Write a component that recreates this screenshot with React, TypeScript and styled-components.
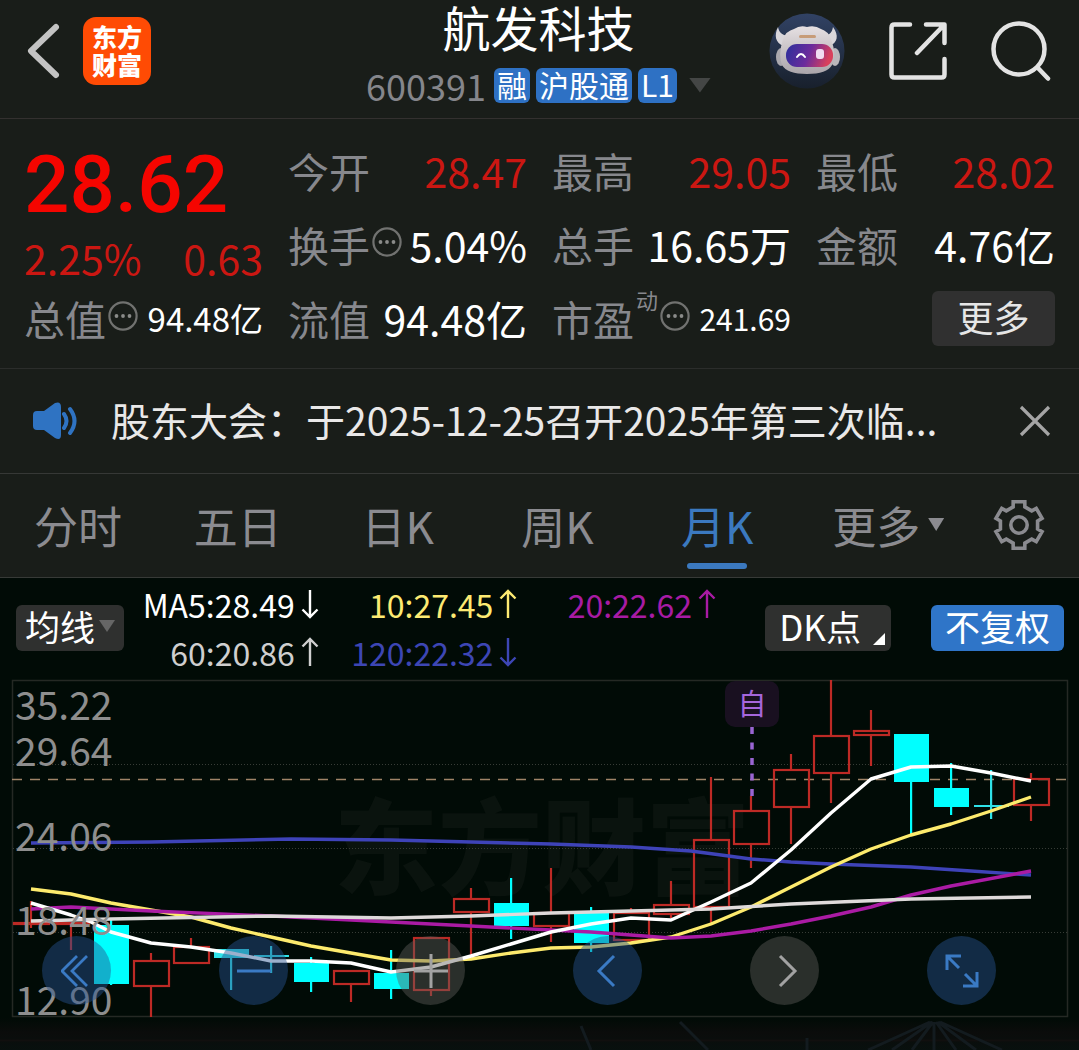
import React from "react";
import styled, { createGlobalStyle } from "styled-components";

const GlobalStyle = createGlobalStyle`
  *, *::before, *::after { box-sizing: border-box; }
  body {
    margin: 0;
    background: #010b06;
    color: #fff;
    font-family: "Noto Sans CJK SC", "Noto Sans", sans-serif;
  }
  button {
    margin: 0;
    padding: 0;
    border: 0;
    background: none;
    color: inherit;
    font: inherit;
    cursor: pointer;
  }
  svg { display: block; flex: none; }
  h1, p, dl, dd, dt { margin: 0; font-weight: 400; }
`;

const Page = styled.main`
  display: flex;
  flex-direction: column;
`;

/* ---------- header ---------- */

const Header = styled.header`
  display: grid;
  grid-template-columns: 1fr auto 1fr;
  align-items: start;
  height: 119px;
  padding: 0 28px 0 26px;
  background: #191d19;
  border-bottom: 1px solid #33302f;
`;

const HeaderSide = styled.div<{ $end?: boolean }>`
  display: flex;
  align-items: center;
  justify-content: ${(p) => (p.$end ? "flex-end" : "flex-start")};
  gap: ${(p) => (p.$end ? 44 : 22)}px;
  height: 102px;
`;

const Logo = styled.span`
  display: grid;
  place-content: center;
  width: 68px;
  height: 68px;
  padding-bottom: 2px;
  border-radius: 13px;
  background: #ff4b04;
  font-size: 25px;
  line-height: 28px;
  font-weight: 900;
  text-align: center;
`;

const HeaderCenter = styled.div`
  display: flex;
  flex-direction: column;
  align-items: center;
`;

const StockName = styled.h1`
  margin-bottom: 4px;
  font-size: 48px;
  line-height: 52px;
`;

const CodeRow = styled.div`
  display: flex;
  align-items: center;
  gap: 6px;
  height: 58px;
`;

const Code = styled.span`
  margin-right: 2px;
  color: #85868b;
  font-size: 36px;
  line-height: 40px;
`;

const Tag = styled.span`
  height: 35px;
  padding: 0 3px;
  border-radius: 6px;
  background: #2e71c4;
  font-size: 30px;
  line-height: 32px;
`;

const Triangle = styled.span<{ $w: number; $h: number; $color: string }>`
  width: ${(p) => p.$w}px;
  height: ${(p) => p.$h}px;
  flex: none;
  background: ${(p) => p.$color};
  clip-path: polygon(0 0, 100% 0, 50% 100%);
`;

const CodeMenu = styled.button`
  display: flex;
  padding-left: 6px;
`;

/* ---------- quote ---------- */

const Quote = styled.section`
  display: grid;
  grid-template-columns: repeat(4, 1fr);
  grid-auto-rows: 74px;
  column-gap: 25px;
  padding: 14px 24px 13px;
  background: #191d19;
  border-bottom: 1px solid #2b2d2b;
`;

const PriceBlock = styled.div`
  grid-row: span 2;
  display: flex;
  flex-direction: column;
`;

const Price = styled.strong`
  color: #f50500;
  font-family: Roboto, "Noto Sans", sans-serif;
  font-size: 80px;
  line-height: 104px;
  font-weight: 500;
`;

const Change = styled.div`
  display: flex;
  justify-content: space-between;
  color: #cb1712;
  font-size: 41px;
  line-height: 40px;
`;

const Field = styled.dl`
  display: flex;
  align-items: center;
  justify-content: space-between;
  white-space: nowrap;
`;

const Term = styled.dt`
  display: flex;
  align-items: center;
  gap: 2px;
  color: #87888d;
  font-size: 41px;
  line-height: 60px;

  svg { margin-bottom: 4px; }
`;

const Sup = styled.sup`
  align-self: flex-start;
  font-size: 22px;
  line-height: 22px;
`;

const Value = styled.dd<{ $tone?: "up"; $size?: number }>`
  color: ${(p) => (p.$tone === "up" ? "#cb1712" : "#fff")};
  font-size: ${(p) => p.$size ?? 41}px;
  line-height: 60px;
`;

const MoreButton = styled.button`
  justify-self: end;
  align-self: center;
  width: 123px;
  height: 55px;
  padding-bottom: 4px;
  border-radius: 6px;
  background: #303030;
  color: #e6e6e6;
  font-size: 36px;
  line-height: 50px;
`;

/* ---------- notice ---------- */

const Notice = styled.section`
  display: flex;
  align-items: center;
  height: 105px;
  padding: 0 28px 0 33px;
  background: #191d19;
  border-bottom: 1px solid #363836;
`;

const NoticeText = styled.p`
  flex: 1;
  min-width: 0;
  margin: 0 32px;
  padding-bottom: 4px;
  overflow: hidden;
  white-space: nowrap;
  color: #e9e8e8;
  font-size: 39px;
  line-height: 60px;
`;

/* ---------- tabs ---------- */

const Tabs = styled.nav`
  display: grid;
  grid-template-columns: repeat(6, 4fr) 3fr;
  height: 104px;
  background: #191d19;
  border-bottom: 1px solid #373a37;
`;

const Tab = styled.button<{ $active?: boolean }>`
  position: relative;
  display: flex;
  align-items: center;
  justify-content: center;
  gap: 8px;
  color: ${(p) => (p.$active ? "#3b79bf" : "#8b8b90")};
  font-size: 44px;
  line-height: 64px;
  padding: 0 4px 2px 0;

  &::after {
    content: "";
    display: ${(p) => (p.$active ? "block" : "none")};
    position: absolute;
    bottom: 8px;
    width: 60px;
    height: 6px;
    border-radius: 3px;
    background: #3b79bf;
  }
`;

const MoreTab = styled(Tab)`
  padding-left: 22px;
`;

const SettingsTab = styled(Tab)`
  padding-right: 0;
`;

/* ---------- chart ---------- */

const Toolbar = styled.div`
  display: flex;
  align-items: center;
  height: 100px;
  padding: 0 15px 0 16px;
`;

const Chip = styled.button<{ $pad?: number; $primary?: boolean }>`
  display: flex;
  flex: none;
  align-items: center;
  justify-content: center;
  gap: 4px;
  height: 46px;
  padding: 0 ${(p) => p.$pad ?? 9}px 4px;
  border-radius: 6px;
  background: ${(p) => (p.$primary ? "#2f75c8" : "#2f302f")};
  font-size: 35px;
  line-height: 42px;
`;

const MaList = styled.div`
  display: grid;
  grid-template-columns: repeat(3, 1fr);
  flex: 0 1 596px;
  grid-auto-rows: 48px;
  margin-left: -4px;
`;

const Ma = styled.span<{ $color: string }>`
  display: flex;
  align-items: center;
  justify-content: flex-end;
  gap: 6px;
  color: ${(p) => p.$color};
  font-size: 32px;
  line-height: 48px;
  white-space: nowrap;
`;

const ToolbarEnd = styled.div`
  display: flex;
  gap: 40px;
  margin-left: auto;
`;

const Corner = styled.span`
  align-self: flex-end;
  width: 12px;
  height: 12px;
  margin: 0 -8px 2px 8px;
  background: #fff;
  clip-path: polygon(100% 0, 100% 100%, 0 100%);
`;

const ChartArea = styled.section`
  position: relative;

  > svg { width: 100%; height: auto; overflow: visible; }
`;

const Controls = styled.div`
  position: absolute;
  inset: auto 83px 45px 42px;
  display: flex;
  justify-content: space-between;
`;

const Round = styled.button<{ $blue?: boolean }>`
  display: grid;
  place-items: center;
  width: 69px;
  height: 69px;
  border-radius: 50%;
  background: ${(p) => (p.$blue ? "rgba(40, 82, 144, 0.46)" : "rgba(96, 94, 90, 0.44)")};
  color: ${(p) => (p.$blue ? "#3a7ac4" : "#a2a2a2")};
`;

const Dots = () => (
  <svg width="30" height="30" viewBox="0 0 30 30" aria-hidden="true">
    <circle cx="15" cy="15" r="13.6" fill="none" stroke="#717270" strokeWidth="2.2" />
    {[8.5, 15, 21.5].map((x) => (
      <circle key={x} cx={x} cy="15" r="1.9" fill="#8a8b89" />
    ))}
  </svg>
);

const Arrow = ({ down }: { down?: boolean }) => (
  <svg width="18" height="30" viewBox="0 0 18 30" fill="none" stroke="currentColor" strokeWidth="2.4" aria-hidden="true">
    <path d={down ? "M9 1V28M1.5 20.5L9 28L16.5 20.5" : "M9 29V2M1.5 9.5L9 2L16.5 9.5"} />
  </svg>
);

const gearPath = (() => {
  const pts: string[] = [];
  for (let i = 0; i < 6; i++) {
    const a = i * 60 - 90;
    [[-18, 19], [-14, 24], [14, 24], [18, 19]].forEach(([d, r]) => {
      const t = ((a + d) * Math.PI) / 180;
      pts.push(`${(27 + r * Math.cos(t)).toFixed(2)} ${(27 + r * Math.sin(t)).toFixed(2)}`);
    });
  }
  return `M${pts.join("L")}Z`;
})();

const Robot = () => (
  <svg width="76" height="76" viewBox="0 0 76 76" aria-hidden="true">
    <defs>
      <linearGradient id="sky" x1="0" y1="0" x2="0" y2="1">
        <stop offset="0" stopColor="#314264" />
        <stop offset="1" stopColor="#18202c" />
      </linearGradient>
      <linearGradient id="shell" x1="0" y1="0" x2="0" y2="1">
        <stop offset="0" stopColor="#e6e0e2" />
        <stop offset="1" stopColor="#aaa5aa" />
      </linearGradient>
      <linearGradient id="visor" x1="0" y1="0" x2="1" y2="0.2">
        <stop offset="0" stopColor="#2b2f9b" />
        <stop offset="0.55" stopColor="#6b2b9c" />
        <stop offset="1" stopColor="#d8405c" />
      </linearGradient>
    </defs>
    <circle cx="38" cy="38" r="37.5" fill="url(#sky)" />
    <path d="M9 14C5 22 6 30 15 33L22 23C14 23 10 20 9 14ZM64 14C70 22 69 30 60 33L52 23C60 23 63 20 64 14Z" fill="#d9d6da" />
    <ellipse cx="12" cy="44" rx="5" ry="9" fill="#aaa8ae" />
    <ellipse cx="66" cy="44" rx="5" ry="9" fill="#b9b6bb" />
    <path d="M14 26Q17 18 25 16Q31 12 38 14Q46 12 52 16Q59 18 62 26Q68 42 63 52Q58 61 38 61Q18 61 13 52Q9 42 14 26Z" fill="url(#shell)" />
    <rect x="30" y="22" width="17" height="3" rx="1.5" fill="#c79c78" />
    <rect x="17" y="31" width="47" height="23" rx="11" fill="url(#visor)" />
    <path d="M28 44Q32 38 36 44" fill="none" stroke="#fff" strokeWidth="2" strokeLinecap="round" />
    <rect x="47" y="36" width="8" height="10" rx="3" fill="#f0dcf2" />
  </svg>
);

/* top/bottom bound the body, high/low the wick */
type Candle = { up: boolean; top: number; bottom: number; high: number; low: number };
const candles: Candle[] = (
  [
    [1, 923, 924, 901, 928], [1, 923, 924, 923, 950], [0, 925, 984, 919, 985], [1, 961, 986, 953, 1017],
    [1, 947, 963, 938, 964], [0, 949, 958, 949, 990], [0, 955, 957, 946, 973], [0, 963, 982, 957, 992],
    [1, 971, 984, 971, 1002], [0, 973, 989, 950, 999], [1, 938, 990, 938, 996], [1, 899, 912, 888, 955],
    [0, 903, 926, 878, 939], [1, 913, 926, 868, 942], [0, 911, 943, 907, 952], [1, 913, 940, 908, 943],
    [1, 905, 914, 881, 918], [1, 840, 907, 777, 925], [1, 811, 844, 796, 868], [1, 770, 807, 754, 844],
    [1, 736, 773, 680, 803], [1, 731, 735, 710, 766], [0, 734, 782, 734, 834], [0, 788, 807, 763, 815],
    [0, 805, 807, 770, 819], [1, 779, 805, 773, 821],
  ] as number[][]
).map(([u, top, bottom, high, low]) => ({ up: u === 1, top, bottom, high, low }));

const averages = [
  { color: "#3e43b8", points: "31,843 151,842 291,839 391,840 471,842 551,844 631,847 691,851 751,859 791,862 831,864 911,867 971,871 1031,875" },
  { color: "#fdeb6d", points: "31,889 71,894 111,903 151,910 191,917 231,928 271,937 311,946 351,953 391,960 431,961 471,959 511,953 551,948 591,947 631,943 671,937 711,924 751,907 791,887 831,867 871,849 911,835 951,824 991,811 1031,797" },
  { color: "#aa1ba4", points: "31,909 71,907 151,911 271,916 391,922 471,926 551,930 591,932 631,935 671,938 711,936 751,931 791,924 831,916 871,907 911,895 951,886 1031,871" },
  { color: "#ffffff", points: "31,903 71,915 91,922 111,932 151,943 191,947 231,953 271,961 311,961 351,963 391,972 431,967 471,956 511,944 551,932 591,924 631,918 671,920 711,902 751,883 791,850 831,813 871,779 911,767 951,766 991,773 1031,781" },
  { color: "#dedada", points: "31,921 111,919 271,916 391,918 471,916 551,913 671,910 711,909 791,904 911,899 1031,897" },
];

const priceLabels: [string, number][] = [
  ["35.22", 720], ["29.64", 766], ["24.06", 851], ["18.48", 935], ["12.90", 1015],
];

const CandleChart = () => (
  <svg viewBox="0 678 1079 372" role="img" aria-label="月K线图">
    <defs>
      <linearGradient id="foot" x1="0" y1="0" x2="0" y2="1">
        <stop offset="0" stopColor="#010b06" />
        <stop offset="0.45" stopColor="#0b0c0b" />
        <stop offset="1" stopColor="#08100e" />
      </linearGradient>
    </defs>
    <rect x="0" y="1018" width="1079" height="32" fill="url(#foot)" />
    <path d="M0 1040.5H1079" stroke="#110f0e" strokeWidth="2" />
    <g stroke="#131b1f" strokeWidth="3" fill="none">
      <path d="M930 1022L868 1050M932 1022L892 1050M933 1022L912 1050M934 1022V1050M936 1022L956 1050M938 1022L976 1050M940 1022L1002 1050" />
      <path d="M680 1022L708 1050M581 1026L591 1050M807 1038V1050" />
    </g>
    <text x="334" y="887" fontSize="104" fontWeight="900" fill="#0a130e">东方财富</text>
    <path d="M12.5 680.5H1067.5V1016.5H12.5Z" fill="none" stroke="#252924" strokeWidth="1.5" />
    <path d="M13 764.5H1067M13 848.5H1067M13 932.5H1067" stroke="#373c36" strokeDasharray="1 2" />
    <path d="M12 779.5H1067" stroke="#a08468" strokeWidth="1.6" strokeDasharray="10 8" />
    {candles.map(({ up, top, bottom, high, low }, i) => {
      const x = 31 + i * 40;
      const body = bottom - top;
      return up ? (
        <g key={i} stroke="#bd2a25" strokeWidth="2.2" fill="none">
          <path d={`M${x} ${high}V${top}M${x} ${bottom}V${low}`} />
          <rect x={x - 17} y={top} width="35" height={body} />
        </g>
      ) : (
        <g key={i} fill={body < 12 ? "#2fe2e8" : "#00ffff"}>
          <rect x={x - 1} y={high} width="2.2" height={low - high} />
          <rect x={x - 17} y={top} width="35" height={body} />
        </g>
      );
    })}
    {averages.map((a) => (
      <polyline key={a.color} points={a.points} fill="none" stroke={a.color} strokeWidth="3.4" strokeLinejoin="round" />
    ))}
    <rect x="725" y="681" width="54" height="46" rx="10" fill="#191020" />
    <text x="752" y="715" fontSize="29" textAnchor="middle" fill="#a566dc">自</text>
    <path d="M752 727V797" stroke="#9965d2" strokeWidth="3.5" strokeDasharray="7 8.5" />
    <g fontSize="39" fill="#8e8e8e">
      {priceLabels.map(([t, y]) => (
        <text key={t} x="15" y={y}>{t}</text>
      ))}
    </g>
  </svg>
);

const iconProps = { fill: "none", stroke: "currentColor", "aria-hidden": true } as const;

export default function App() {
  return (
    <>
      <GlobalStyle />
      <Page>
        <Header>
          <HeaderSide>
            <button aria-label="返回">
              <svg width="35" height="58" viewBox="0 0 35 58" {...iconProps} stroke="#c3c3c3" strokeWidth="6" strokeLinecap="round" strokeLinejoin="round">
                <path d="M30 5L5 29L30 53" />
              </svg>
            </button>
            <Logo>东方<br />财富</Logo>
          </HeaderSide>
          <HeaderCenter>
            <StockName>航发科技</StockName>
            <CodeRow>
              <Code>600391</Code>
              <Tag>融</Tag>
              <Tag>沪股通</Tag>
              <Tag>L1</Tag>
              <CodeMenu aria-label="展开">
                <Triangle $w={22} $h={15} $color="#444645" />
              </CodeMenu>
            </CodeRow>
          </HeaderCenter>
          <HeaderSide $end>
            <button aria-label="智能助手"><Robot /></button>
            <button aria-label="分享">
              <svg width="58" height="58" viewBox="0 0 58 58" {...iconProps} stroke="#e3e3e3" strokeWidth="4.5" strokeLinecap="round" strokeLinejoin="round">
                <path d="M21 2.5H5.5Q2.5 2.5 2.5 5.5V52.5Q2.5 55.5 5.5 55.5H52.5Q55.5 55.5 55.5 52.5V37M37 2.5H55.5V21M55 3L28 31" />
              </svg>
            </button>
            <button aria-label="搜索">
              <svg width="60" height="60" viewBox="0 0 60 60" {...iconProps} stroke="#e3e3e3" strokeWidth="4.5" strokeLinecap="round">
                <circle cx="28" cy="28" r="25.5" />
                <path d="M46.5 46.5L57 57.5" />
              </svg>
            </button>
          </HeaderSide>
        </Header>

        <Quote>
          <PriceBlock>
            <Price>28.62</Price>
            <Change><span>2.25%</span><span>0.63</span></Change>
          </PriceBlock>
          <Field><Term>今开</Term><Value $tone="up">28.47</Value></Field>
          <Field><Term>最高</Term><Value $tone="up">29.05</Value></Field>
          <Field><Term>最低</Term><Value $tone="up">28.02</Value></Field>
          <Field><Term>换手<Dots /></Term><Value>5.04%</Value></Field>
          <Field><Term>总手</Term><Value>16.65万</Value></Field>
          <Field><Term>金额</Term><Value>4.76亿</Value></Field>
          <Field><Term>总值<Dots /></Term><Value $size={33}>94.48亿</Value></Field>
          <Field><Term>流值</Term><Value>94.48亿</Value></Field>
          <Field><Term>市盈<Sup>动</Sup><Dots /></Term><Value $size={30}>241.69</Value></Field>
          <MoreButton>更多</MoreButton>
        </Quote>

        <Notice>
          <svg width="46" height="38" viewBox="0 0 46 38" fill="#2f73c2" aria-hidden="true">
            <path d="M4 9H11L22 1Q28-1 28 5V33Q28 39 22 36L11 28H4Q0 28 0 24V13Q0 9 4 9Z" />
            <path d="M31 12Q36 19 31 26M37 7Q46 19 37 31" fill="none" stroke="#2f73c2" strokeWidth="4" strokeLinecap="round" />
          </svg>
          <NoticeText>股东大会：于2025-12-25召开2025年第三次临...</NoticeText>
          <button aria-label="关闭">
            <svg width="32" height="32" viewBox="0 0 32 32" {...iconProps} stroke="#a5a5a5" strokeWidth="3.2">
              <path d="M2 2L30 30M30 2L2 30" />
            </svg>
          </button>
        </Notice>

        <Tabs>
          <Tab>分时</Tab>
          <Tab>五日</Tab>
          <Tab>日K</Tab>
          <Tab>周K</Tab>
          <Tab $active aria-current="true">月K</Tab>
          <MoreTab>更多<Triangle $w={16} $h={13} $color="#8b8b90" /></MoreTab>
          <SettingsTab aria-label="设置">
            <svg width="54" height="54" viewBox="0 0 54 54" {...iconProps} strokeWidth="3.6">
              <path d={gearPath} />
              <circle cx="27" cy="27" r="8.2" />
            </svg>
          </SettingsTab>
        </Tabs>

        <Toolbar>
          <Chip>均线<Triangle $w={16} $h={12} $color="#666" /></Chip>
          <MaList>
            <Ma $color="#ffffff">MA5:28.49<Arrow down /></Ma>
            <Ma $color="#fdea72">10:27.45<Arrow /></Ma>
            <Ma $color="#a81ba4">20:22.62<Arrow /></Ma>
            <Ma $color="#cfcfcf">60:20.86<Arrow /></Ma>
            <Ma $color="#3d46b4">120:22.32<Arrow down /></Ma>
          </MaList>
          <ToolbarEnd>
            <Chip $pad={14}>DK点<Corner /></Chip>
            <Chip $pad={14} $primary>不复权</Chip>
          </ToolbarEnd>
        </Toolbar>

        <ChartArea>
          <CandleChart />
          <Controls>
            <Round $blue aria-label="最早">
              <svg width="32" height="34" viewBox="0 0 32 34" {...iconProps} strokeWidth="2.8"><path d="M16 2L1 17L16 32M26 2L11 17L26 32" /></svg>
            </Round>
            <Round $blue aria-label="缩小">
              <svg width="36" height="36" viewBox="0 0 36 36" {...iconProps} strokeWidth="3"><path d="M1 18H35" /></svg>
            </Round>
            <Round aria-label="放大">
              <svg width="36" height="36" viewBox="0 0 36 36" {...iconProps} strokeWidth="3"><path d="M1 18H35M18 1V35" /></svg>
            </Round>
            <Round $blue aria-label="左移">
              <svg width="34" height="34" viewBox="0 0 34 34" {...iconProps} strokeWidth="3"><path d="M23 2L8 17L23 32" /></svg>
            </Round>
            <Round aria-label="右移">
              <svg width="34" height="34" viewBox="0 0 34 34" {...iconProps} strokeWidth="3"><path d="M12 2L27 17L12 32" /></svg>
            </Round>
            <Round $blue aria-label="全屏">
              <svg width="34" height="34" viewBox="0 0 34 34" {...iconProps} strokeWidth="3"><path d="M2 16V2H16M2 2L14 14M32 18V32H18M32 32L20 20" /></svg>
            </Round>
          </Controls>
        </ChartArea>
      </Page>
    </>
  );
}
